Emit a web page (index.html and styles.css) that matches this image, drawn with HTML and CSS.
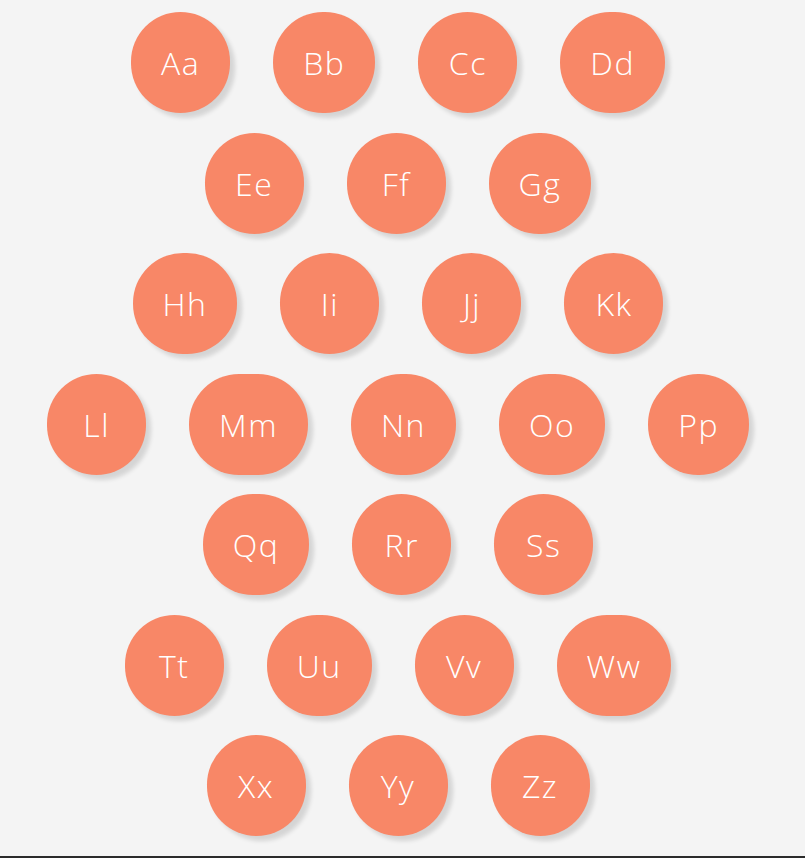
FILE: index.html
```html
<!DOCTYPE html>
<html lang="en">
<head>
<meta charset="utf-8">
<title>Alphabet</title>
<link rel="stylesheet" href="styles.css">
</head>
<body>
<main class="board">
  <div class="row">
    <span class="bubble">Aa</span><span class="bubble">Bb</span><span class="bubble">Cc</span><span class="bubble">Dd</span>
  </div>
  <div class="row">
    <span class="bubble">Ee</span><span class="bubble">Ff</span><span class="bubble">Gg</span>
  </div>
  <div class="row">
    <span class="bubble">Hh</span><span class="bubble">Ii</span><span class="bubble">Jj</span><span class="bubble">Kk</span>
  </div>
  <div class="row">
    <span class="bubble">Ll</span><span class="bubble">Mm</span><span class="bubble">Nn</span><span class="bubble">Oo</span><span class="bubble">Pp</span>
  </div>
  <div class="row">
    <span class="bubble">Qq</span><span class="bubble">Rr</span><span class="bubble">Ss</span>
  </div>
  <div class="row">
    <span class="bubble">Tt</span><span class="bubble">Uu</span><span class="bubble">Vv</span><span class="bubble">Ww</span>
  </div>
  <div class="row">
    <span class="bubble">Xx</span><span class="bubble">Yy</span><span class="bubble">Zz</span>
  </div>
</main>
</body>
</html>
```

FILE: styles.css
```css
html, body {
  margin: 0;
  padding: 0;
}
body {
  background: #f4f4f4;
  height: 100vh;
  box-sizing: border-box;
  border-bottom: 2px solid #2b2b2b;
  overflow: hidden;
  font-family: "Open Sans", "Liberation Sans", sans-serif;
}
.board {
  display: flex;
  flex-direction: column;
  gap: 19.5px;
  padding: 12px 9px 0 0;
}
.row {
  display: flex;
  justify-content: center;
  gap: 43px;
}
.bubble {
  display: flex;
  align-items: center;
  justify-content: center;
  box-sizing: border-box;
  min-width: 99px;
  height: 101px;
  padding: 0 30px;
  border-radius: 50px;
  background: #f88767;
  color: #ffffff;
  font-size: 32px;
  font-weight: 350;
  letter-spacing: 1.5px;
  box-shadow: 5px 5px 4px rgba(0, 0, 0, 0.13);
}
```
